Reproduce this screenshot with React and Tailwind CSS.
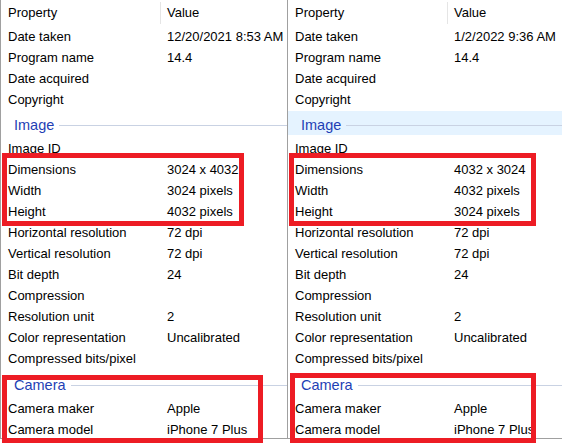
import React from "react";

function Row({ label, value }) {
  return (
    <div className="flex items-center h-[21px] pt-[4px] pl-[7px] whitespace-nowrap">
      <div className="w-[159px] shrink-0">{label}</div>
      <div>{value}</div>
    </div>
  );
}

function Group({ title, h, hl }) {
  return (
    <div className={h}>
      <div
        className={
          "mt-[3px] flex items-center h-[calc(100%-4px)] pt-[5px] pl-[13px] " +
          (hl ? "bg-[#e5f3ff]" : "")
        }
      >
        <span className="text-[14.5px] text-[#1f3fb5] leading-none">{title}</span>
        <div className="flex-1 h-px bg-[#c9d2e3] ml-[5px]" />
      </div>
    </div>
  );
}

function Panel({ data, className, hl }) {
  return (
    <div className={"flex flex-col overflow-hidden " + className}>
      <div className="flex items-center h-[26px] pt-[1px] pl-[7px] whitespace-nowrap">
        <div className="w-[152px] shrink-0">Property</div>
        <div className="w-px h-[22px] bg-[#e5e5e5]" />
        <div className="pl-[6px]">Value</div>
      </div>
      <Row label="Date taken" value={data.date} />
      <Row label="Program name" value="14.4" />
      <Row label="Date acquired" value="" />
      <Row label="Copyright" value="" />
      <Group title="Image" h="h-[30px]" hl={hl} />
      <Row label="Image ID" value="" />
      <Row label="Dimensions" value={data.dim} />
      <Row label="Width" value={data.w} />
      <Row label="Height" value={data.h} />
      <Row label="Horizontal resolution" value="72 dpi" />
      <Row label="Vertical resolution" value="72 dpi" />
      <Row label="Bit depth" value="24" />
      <Row label="Compression" value="" />
      <Row label="Resolution unit" value="2" />
      <Row label="Color representation" value="Uncalibrated" />
      <Row label="Compressed bits/pixel" value="" />
      <Group title="Camera" h="h-[31px]" />
      <Row label="Camera maker" value="Apple" />
      <Row label="Camera model" value="iPhone 7 Plus" />
    </div>
  );
}

export default function App() {
  return (
    <div className="relative w-[562px] h-[443px] bg-white overflow-hidden text-[13px] text-black font-['Liberation_Sans',Arial,sans-serif]">
      <div className="flex h-[439px] border-b border-[#a0a0a0]">
        <Panel
          className="w-[288px] shrink-0 border-l border-r border-[#a0a0a0]"
          data={{
            date: "12/20/2021 8:53 AM",
            dim: "3024 x 4032",
            w: "3024 pixels",
            h: "4032 pixels",
          }}
        />
        <Panel
          className="flex-1"
          hl
          data={{
            date: "1/2/2022 9:36 AM",
            dim: "4032 x 3024",
            w: "4032 pixels",
            h: "3024 pixels",
          }}
        />
      </div>
      <div className="absolute left-[2px] top-[153px] w-[242px] h-[73px] border-[5px] border-[#ed1c24]" />
      <div className="absolute left-[289px] top-[153px] w-[247px] h-[73px] border-[5px] border-[#ed1c24]" />
      <div className="absolute left-[2px] top-[375px] w-[261px] h-[68px] border-[5px] border-[#ed1c24]" />
      <div className="absolute left-[290px] top-[373px] w-[246px] h-[70px] border-[5px] border-[#ed1c24]" />
    </div>
  );
}
